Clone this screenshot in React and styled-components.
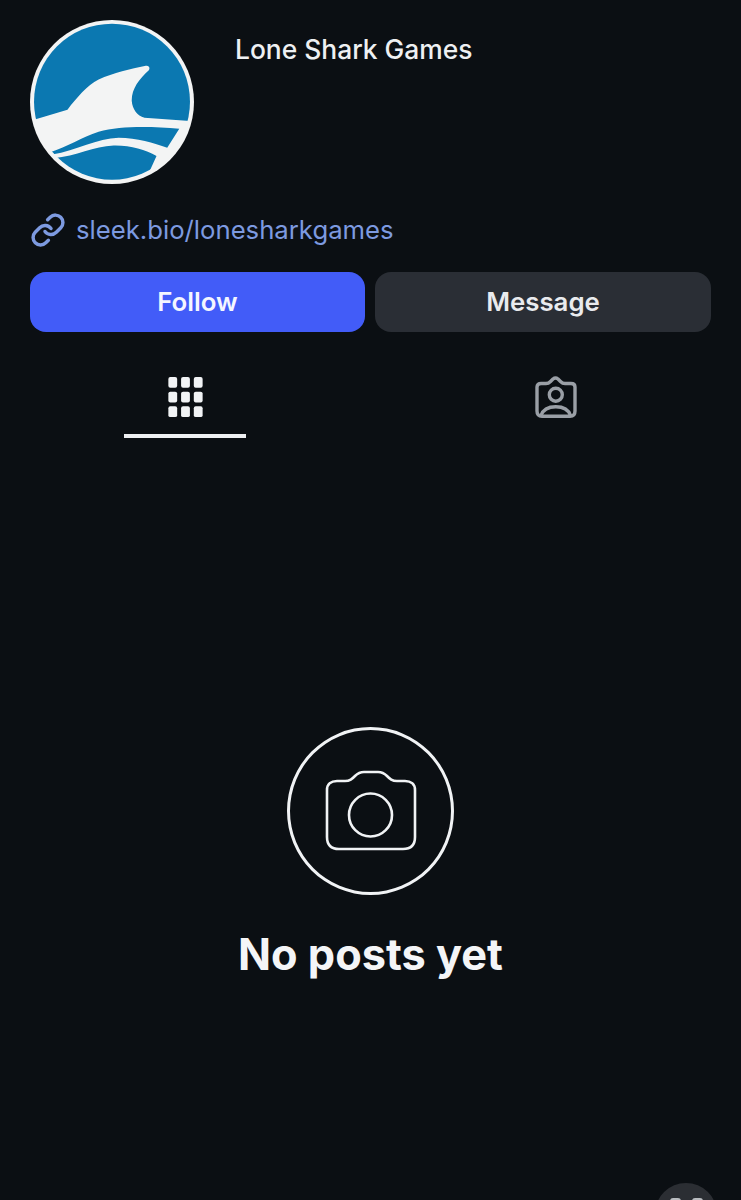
import React from 'react';
import styled, { createGlobalStyle } from 'styled-components';
import { Link } from 'lucide-react';

const GlobalStyle = createGlobalStyle`
  html, body {
    margin: 0;
    padding: 0;
    background: #0b0f13;
  }
  body {
    font-family: Inter, "Noto Sans", sans-serif;
    -webkit-font-smoothing: antialiased;
  }
`;

const Page = styled.div`
  position: relative;
  width: 741px;
  height: 1200px;
  overflow: hidden;
  background: #0b0f13;
  color: #f1f3f5;
`;

const Profile = styled.header`
  display: flex;
  align-items: flex-start;
  gap: 41px;
  padding: 20px 30px 0;
`;

const Avatar = styled.svg`
  display: block;
  width: 164px;
  height: 164px;
  flex: none;
`;

const Name = styled.h1`
  margin: 14px 0 0;
  font-size: 26.4px;
  line-height: 30px;
  font-weight: 500;
  color: #eef0f2;
`;

const LinkRow = styled.a`
  display: flex;
  align-items: center;
  gap: 10px;
  margin: 26px 0 0 30px;
  height: 40px;
  color: #7d9ae0;
  font-size: 25.7px;
  line-height: 40px;
  text-decoration: none;
`;

const Actions = styled.div`
  display: grid;
  grid-template-columns: 335px 336px;
  gap: 10px;
  margin: 22px 0 0 30px;
`;

const Button = styled.button`
  height: 60px;
  border: 0;
  padding: 0 0 2px;
  border-radius: 16px;
  font-family: inherit;
  font-size: 25.8px;
  font-weight: 600;
  color: ${props => (props.$primary ? '#f4f6ff' : '#e9ebee')};
  background: ${props => (props.$primary ? '#425cf8' : '#2a2e35')};
`;

const Tabs = styled.nav`
  display: grid;
  grid-template-columns: 370px 371px;
  margin-top: 30px;
`;

const Tab = styled.div`
  display: flex;
  flex-direction: column;
  align-items: center;
  height: 76px;
  padding-top: 14px;
  box-sizing: border-box;
  color: ${props => (props.$active ? '#f1f3f5' : '#9a9fa6')};
`;

const TabIcon = styled.svg`
  display: block;
  width: 44px;
  height: 44px;
`;

const Underline = styled.div`
  width: 122px;
  height: 4px;
  margin-top: 15px;
  background: #eef0f2;
`;

const Empty = styled.section`
  display: flex;
  flex-direction: column;
  align-items: center;
  margin-top: 289px;
`;

const CameraRing = styled.div`
  display: flex;
  align-items: center;
  justify-content: center;
  width: 167px;
  height: 168px;
  box-sizing: border-box;
  border: 3px solid #f1f3f5;
  border-radius: 50%;
`;

const CameraIcon = styled.svg`
  display: block;
  width: 92px;
  height: 82px;
`;

const EmptyTitle = styled.h2`
  margin: 31px 0 0;
  font-size: 43.3px;
  line-height: 56px;
  font-weight: 700;
  color: #f4f5f7;
`;

const Fab = styled.div`
  position: absolute;
  left: 655px;
  top: 1183px;
  display: flex;
  justify-content: center;
  gap: 11px;
  width: 62px;
  height: 62px;
  padding-top: 15px;
  box-sizing: border-box;
  border-radius: 50%;
  background: #2b2e33;
`;

const FabDot = styled.span`
  width: 11px;
  height: 11px;
  border-radius: 3px;
  background: #b9bcc0;
`;

const SharkLogo = () => (
  <Avatar viewBox="30 30 490 490">
    <defs>
      <clipPath id="disc">
        <circle cx="275" cy="274" r="233" />
      </clipPath>
    </defs>
    <circle cx="275" cy="275" r="245" fill="#f3f4f4" />
    <g clipPath="url(#disc)" fill="#0b78b1">
      <path d="M20 20 H530 V333 L372 322 C350 316 336 296 334 272 C333 236 356 206 385 180 C390 172 384 165 376 167 C330 176 280 188 235 208 C200 226 170 262 142 298 L20 335 Z" />
      <path d="M88 426 C140 410 185 380 235 364 C300 346 390 348 476 355 L440 412 C400 398 350 382 295 382 C230 384 170 420 96 432 Z" />
      <path d="M100 443 C170 436 220 408 280 405 C330 404 375 418 408 436 L370 520 H100 Z" />
    </g>
  </Avatar>
);

const GridGlyph = () => (
  <TabIcon viewBox="0 0 44 44">
    {[1, 16, 31].flatMap(y =>
      [5, 18, 31].map(x => (
        <rect key={`${x}-${y}`} x={x} y={y} width="9" height="11" rx="2" fill="currentColor" />
      ))
    )}
  </TabIcon>
);

const TaggedGlyph = () => (
  <TabIcon viewBox="0 0 44 44" fill="none" stroke="currentColor" strokeWidth="3.4" strokeLinejoin="round" strokeLinecap="round">
    <path d="M3 11 C3 8.5 4.5 7.5 7 7.5 H12 C14 7.5 15 7 16.5 5.5 L19 3 C20.6 1.7 22.4 1.7 24 3 L26.5 5.5 C28 7 29 7.5 31 7.5 H37 C39.5 7.5 41 8.5 41 11 V35 C41 38.5 39.5 40.3 36 40.3 H8 C4.5 40.3 3 38.5 3 35 Z" />
    <circle cx="21.8" cy="18.7" r="6.5" />
    <path d="M7 39.5 C9 33.5 14.5 30.7 21.8 30.7 C29 30.7 34.5 33.5 36.5 39.5" />
  </TabIcon>
);

const Camera = () => (
  <CameraIcon viewBox="0 0 92 82" fill="none" stroke="#f1f3f5" strokeWidth="2.6">
    <path d="M2 20 C2 14 6 11 12 11 H20 C25 11 27 9 30 6 C33 3 35 2 39 2 H53 C57 2 59 3 62 6 C65 9 67 11 72 11 H80 C86 11 90 14 90 20 V67 C90 75 86 79 78 79 H14 C6 79 2 75 2 67 Z" />
    <circle cx="45.5" cy="45" r="21.5" />
  </CameraIcon>
);

export default function App() {
  return (
    <Page>
      <GlobalStyle />
      <Profile>
        <SharkLogo />
        <Name>Lone Shark Games</Name>
      </Profile>
      <LinkRow>
        <Link size={36} strokeWidth={2.3} />
        sleek.bio/lonesharkgames
      </LinkRow>
      <Actions>
        <Button $primary>Follow</Button>
        <Button>Message</Button>
      </Actions>
      <Tabs>
        <Tab $active>
          <GridGlyph />
          <Underline />
        </Tab>
        <Tab>
          <TaggedGlyph />
        </Tab>
      </Tabs>
      <Empty>
        <CameraRing>
          <Camera />
        </CameraRing>
        <EmptyTitle>No posts yet</EmptyTitle>
      </Empty>
      <Fab>
        <FabDot />
        <FabDot />
      </Fab>
    </Page>
  );
}
